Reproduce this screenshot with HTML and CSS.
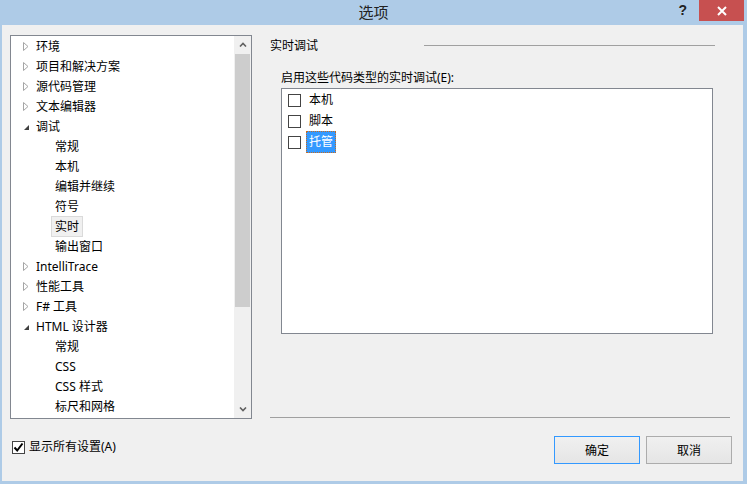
FILE: index.html
```html
<!DOCTYPE html>
<html lang="zh-CN">
<head>
  <meta charset="UTF-8" />
  <title>选项</title>
  <link rel="stylesheet" href="styles.css">
</head>
<body>
  <div class="window">
    <header class="titlebar">
      <div></div>
      <div class="title">选项</div>
      <div class="title-buttons">
        <span class="help">?</span>
        <span class="close">
          <svg width="10" height="10" viewBox="0 0 10 10"><path d="M1 1 L9 9 M9 1 L1 9" stroke="#fff" stroke-width="2"/></svg>
        </span>
      </div>
    </header>

    <div class="client">
      <div class="main">
        <!-- left tree -->
        <div class="tree">
          <div class="tree-list">
            <div class="row"><span class="twist"><svg width="6" height="9" viewBox="0 0 6 9"><path d="M0.5 0.5 L5 4.5 L0.5 8.5 Z" fill="#fff" stroke="#a6a6a6"/></svg></span>环境</div>
            <div class="row"><span class="twist"><svg width="6" height="9" viewBox="0 0 6 9"><path d="M0.5 0.5 L5 4.5 L0.5 8.5 Z" fill="#fff" stroke="#a6a6a6"/></svg></span>项目和解决方案</div>
            <div class="row"><span class="twist"><svg width="6" height="9" viewBox="0 0 6 9"><path d="M0.5 0.5 L5 4.5 L0.5 8.5 Z" fill="#fff" stroke="#a6a6a6"/></svg></span>源代码管理</div>
            <div class="row"><span class="twist"><svg width="6" height="9" viewBox="0 0 6 9"><path d="M0.5 0.5 L5 4.5 L0.5 8.5 Z" fill="#fff" stroke="#a6a6a6"/></svg></span>文本编辑器</div>
            <div class="row"><span class="twist"><svg width="7" height="9" viewBox="0 0 7 9"><path d="M6 3 L6 8 L1 8 Z" fill="#404040"/></svg></span>调试</div>
            <div class="row child">常规</div>
            <div class="row child">本机</div>
            <div class="row child">编辑并继续</div>
            <div class="row child">符号</div>
            <div class="row child"><span class="selected">实时</span></div>
            <div class="row child">输出窗口</div>
            <div class="row"><span class="twist"><svg width="6" height="9" viewBox="0 0 6 9"><path d="M0.5 0.5 L5 4.5 L0.5 8.5 Z" fill="#fff" stroke="#a6a6a6"/></svg></span>IntelliTrace</div>
            <div class="row"><span class="twist"><svg width="6" height="9" viewBox="0 0 6 9"><path d="M0.5 0.5 L5 4.5 L0.5 8.5 Z" fill="#fff" stroke="#a6a6a6"/></svg></span>性能工具</div>
            <div class="row"><span class="twist"><svg width="6" height="9" viewBox="0 0 6 9"><path d="M0.5 0.5 L5 4.5 L0.5 8.5 Z" fill="#fff" stroke="#a6a6a6"/></svg></span>F# 工具</div>
            <div class="row"><span class="twist"><svg width="7" height="9" viewBox="0 0 7 9"><path d="M6 3 L6 8 L1 8 Z" fill="#404040"/></svg></span>HTML 设计器</div>
            <div class="row child">常规</div>
            <div class="row child">CSS</div>
            <div class="row child">CSS 样式</div>
            <div class="row child">标尺和网格</div>
          </div>
          <div class="scrollbar">
            <div class="sb-btn">
              <svg width="8" height="5" viewBox="0 0 8 5"><path d="M1 4.5 L4 1.5 L7 4.5" fill="none" stroke="#606060" stroke-width="1.6"/></svg>
            </div>
            <div class="sb-track"><div class="sb-thumb"></div></div>
            <div class="sb-btn">
              <svg width="8" height="5" viewBox="0 0 8 5"><path d="M1 0.5 L4 3.5 L7 0.5" fill="none" stroke="#606060" stroke-width="1.6"/></svg>
            </div>
          </div>
        </div>

        <!-- right panel -->
        <div class="panel">
          <div class="group-head">
            <span>实时调试</span>
            <span class="group-line"></span>
          </div>
          <div class="list-label">启用这些代码类型的实时调试(E):</div>
          <div class="checklist">
            <div class="check-row"><span class="box"></span><span class="item">本机</span></div>
            <div class="check-row"><span class="box"></span><span class="item">脚本</span></div>
            <div class="check-row"><span class="box"></span><span class="item focus">托管</span></div>
          </div>
          <div class="separator"></div>
        </div>
      </div>

      <div class="footer">
        <label class="show-all">
          <span class="box checked">
            <svg width="11" height="11" viewBox="0 0 11 11"><path d="M1.5 5.5 L4.2 8.5 L9.5 1.5" fill="none" stroke="#000" stroke-width="2"/></svg>
          </span>
          显示所有设置(A)
        </label>
        <div class="buttons">
          <button class="btn default">确定</button>
          <button class="btn">取消</button>
        </div>
      </div>
    </div>
  </div>
</body>
</html>
```

FILE: styles.css
```css
* { box-sizing: border-box; margin: 0; padding: 0; }
body {
  background-color: #aecbe7;
  color: #000;
  font-family: "Noto Sans", "Noto Sans CJK SC", sans-serif;
  font-size: 12px;
}
.window {
  display: flex;
  flex-direction: column;
  height: 484px;
  width: 747px;
}
.titlebar {
  display: grid;
  grid-template-columns: 1fr auto 1fr;
  height: 25px;
}
.title {
  color: #222;
  font-size: 15px;
  line-height: 25px;
}
.title-buttons {
  align-items: flex-start;
  display: flex;
  justify-content: flex-end;
}
.help {
  color: #222;
  font-family: "Liberation Sans", sans-serif;
  font-size: 14px;
  font-weight: bold;
  line-height: 20px;
  margin-right: 12px;
}
.close {
  align-items: center;
  background-color: #c75050;
  display: flex;
  height: 21px;
  justify-content: center;
  margin-right: 3px;
  width: 45px;
}
.client {
  background-color: #f0f0f0;
  display: flex;
  flex: 1;
  flex-direction: column;
  margin: 0 4px 3px 2px;
  padding: 10px 11px 0 8px;
}
.main {
  display: flex;
  height: 384px;
}

/* tree */
.tree {
  background-color: #fff;
  border: 1px solid #828790;
  display: flex;
  width: 242px;
}
.tree-list {
  flex: 1;
  overflow: hidden;
}
.row {
  align-items: center;
  display: flex;
  height: 20px;
  padding-left: 11px;
  white-space: nowrap;
}
.row.child { padding-left: 44px; }
.twist {
  align-items: center;
  display: flex;
  height: 20px;
  padding-left: 1px;
  width: 14px;
}
.selected {
  background-color: #f0f0f0;
  border: 1px solid #dadada;
  height: 21px;
  line-height: 19px;
  margin-left: -4px;
  padding: 0 3px;
}
.scrollbar {
  background-color: #f0f0f0;
  display: flex;
  flex-direction: column;
  width: 17px;
}
.sb-btn {
  align-items: center;
  display: flex;
  height: 17px;
  justify-content: center;
}
.sb-track {
  flex: 1;
  padding: 1px 1px 0;
}
.sb-thumb {
  background-color: #cdcdcd;
  height: 253px;
}

/* right panel */
.panel {
  display: flex;
  flex: 1;
  flex-direction: column;
  margin-left: 18px;
}
.group-head {
  align-items: center;
  display: flex;
  height: 20px;
  justify-content: space-between;
}
.group-line {
  background-color: #a0a0a0;
  height: 1px;
  margin-right: 17px;
  width: 291px;
}
.list-label {
  line-height: 16px;
  margin: 15px 0 2px 11px;
}
.checklist {
  background-color: #fff;
  border: 1px solid #828790;
  height: 246px;
  margin-left: 11px;
  width: 432px;
}
.check-row {
  align-items: center;
  display: flex;
  height: 21px;
  padding: 1px 0 0 6px;
}
.box {
  background-color: #fff;
  border: 1px solid #444;
  display: inline-flex;
  height: 13px;
  width: 13px;
}
.item {
  border: 1px dotted transparent;
  line-height: 20px;
  margin-left: 5px;
  padding: 0 2px;
}
.item.focus {
  background-color: #3399ff;
  border-color: #c86a1e;
  color: #fff;
}
.separator {
  background-color: #a0a0a0;
  height: 1px;
  margin: auto 2px 1px 0;
}

/* footer */
.footer {
  align-items: flex-start;
  display: flex;
  justify-content: space-between;
  padding-top: 17px;
}
.show-all {
  align-items: center;
  display: flex;
  gap: 4px;
  line-height: 16px;
  margin: 3px 0 0 2px;
}
.box.checked {
  align-items: center;
  justify-content: center;
}
.buttons {
  display: flex;
  gap: 6px;
}
.btn {
  background: linear-gradient(#f0f0f0, #e5e5e5);
  border: 1px solid #acacac;
  color: #000;
  font-family: "Noto Sans", "Noto Sans CJK SC", sans-serif;
  font-size: 12px;
  height: 28px;
  width: 86px;
}
.btn.default { border-color: #3399ff; }
```
